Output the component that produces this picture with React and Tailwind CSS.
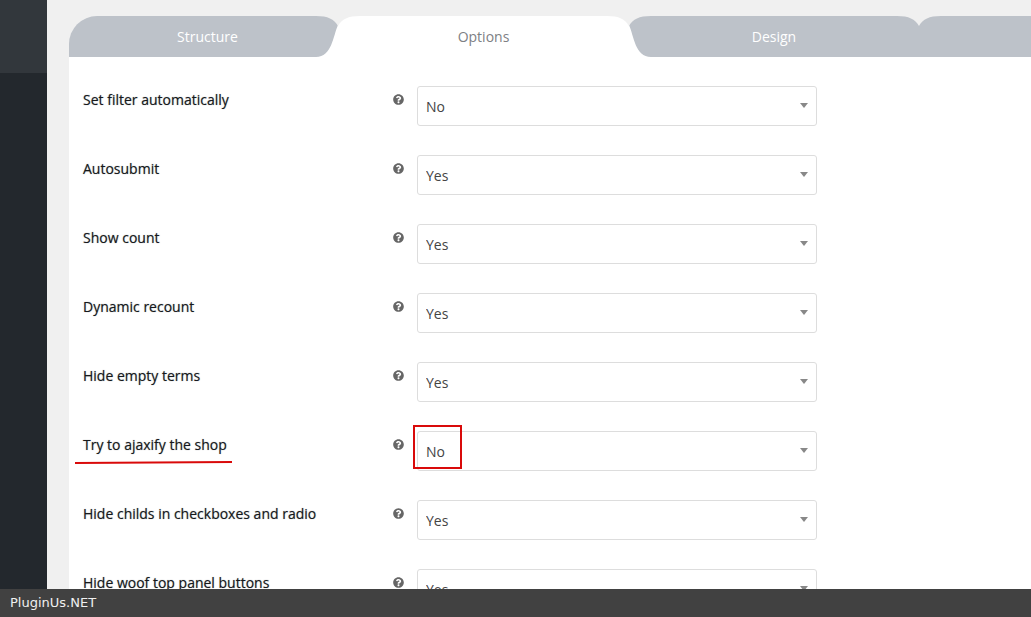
import { useState } from "react";
import { FaQuestionCircle } from "react-icons/fa";

const TABS = [
  { id: "structure", label: "Structure", size: "w-[269px] shrink-0 rounded-tl-[28px] pl-2" },
  { id: "options", label: "Options", size: "w-[291px] shrink-0" },
  { id: "design", label: "Design", size: "w-[290px] shrink-0" },
  { id: "more", label: "", size: "flex-1" },
];

const OPTIONS = [
  { id: "auto", label: "Set filter automatically", value: "No" },
  { id: "autosubmit", label: "Autosubmit", value: "Yes" },
  { id: "count", label: "Show count", value: "Yes" },
  { id: "recount", label: "Dynamic recount", value: "Yes" },
  { id: "empty", label: "Hide empty terms", value: "Yes" },
  { id: "ajax", label: "Try to ajaxify the shop", value: "No", marked: true },
  { id: "childs", label: "Hide childs in checkboxes and radio", value: "Yes" },
  { id: "panel", label: "Hide woof top panel buttons", value: "Yes" },
];

// curved seam between two neighbouring tabs
function TabSeam({ leftActive, rightActive }) {
  return (
    <svg
      className="pointer-events-none absolute -left-[22px] top-0 z-10"
      width="44"
      height="41"
      viewBox="0 0 44 41"
      aria-hidden="true"
    >
      {rightActive && (
        <path d="M22 9 C17 20 16 41 0 41 H23 V9Z" fill="#fff" />
      )}
      {leftActive && (
        <path d="M22 9 C27 20 28 41 44 41 H21 V9Z" fill="#fff" />
      )}
      <path d="M0 0 C12 0 18 3 22 10 C26 3 32 0 44 0Z" fill="#f0f0f0" />
    </svg>
  );
}

function Tabs({ active, onChange }) {
  return (
    <div role="tablist" className="flex h-[41px] overflow-hidden">
      {TABS.map((tab, i) => {
        const isActive = tab.id === active;
        return (
          <button
            key={tab.id}
            type="button"
            role="tab"
            aria-selected={isActive}
            aria-label={tab.label || "More"}
            onClick={() => onChange(tab.id)}
            className={`relative text-sm ${tab.size} ${
              isActive ? "bg-white text-[#7d8084]" : "bg-[#bdc2c9] text-white"
            }`}
          >
            {i > 0 && (
              <TabSeam
                leftActive={TABS[i - 1].id === active}
                rightActive={isActive}
              />
            )}
            {tab.label}
          </button>
        );
      })}
    </div>
  );
}

function OptionRow({ option }) {
  return (
    <div className="flex h-10 items-start">
      <div className="flex w-[334px] shrink-0 justify-between pr-[13px]">
        <div className="relative">
          <label
            htmlFor={option.id}
            className="block pt-1 text-sm font-medium text-[#16191c] [text-shadow:0_0_1px_#23282d80]"
          >
            {option.label}
          </label>
          {option.marked && (
            <svg
              className="absolute -left-2 top-7"
              width="158"
              height="6"
              viewBox="0 0 158 6"
              aria-hidden="true"
            >
              <path d="M0 4 L157 3" stroke="#d90a0a" strokeWidth="2" />
            </svg>
          )}
        </div>
        <FaQuestionCircle className="mt-2 size-[11px] text-[#666]" />
      </div>
      <div className="relative w-[400px]">
        <select
          id={option.id}
          defaultValue={option.value}
          className="h-10 w-full appearance-none rounded-[3px] border border-[#ddd] bg-white px-2 pt-0.5 text-sm text-[#444] outline-none"
        >
          <option>No</option>
          <option>Yes</option>
        </select>
        <svg
          className="pointer-events-none absolute right-[9px] top-[17px]"
          width="8"
          height="5"
          viewBox="0 0 8 5"
          aria-hidden="true"
        >
          <path d="M0 0H8L4 5Z" fill="#888" />
        </svg>
        {option.marked && (
          <div className="pointer-events-none absolute -left-1 -top-1.5 h-11 w-[49px] border-2 border-[#d90a0a]" />
        )}
      </div>
    </div>
  );
}

export default function App() {
  const [active, setActive] = useState("options");

  return (
    <div className="flex h-screen flex-col bg-[#f0f0f0] font-['Open_Sans',sans-serif]">
      <div className="flex min-h-0 flex-1 overflow-hidden">
        <aside className="w-[47px] shrink-0 bg-[#23282d]">
          <div className="h-[73px] bg-[#32373c]" />
        </aside>
        <main className="min-w-0 flex-1 pl-[22px] pt-4">
          <Tabs active={active} onChange={setActive} />
          <form className="flex flex-col gap-[29px] bg-white pb-8 pl-3.5 pt-[29px]">
            {OPTIONS.map((option) => (
              <OptionRow key={option.id} option={option} />
            ))}
          </form>
        </main>
      </div>
      <footer className="flex h-7 shrink-0 items-center bg-[#414141] px-2.5 font-['DejaVu_Sans',sans-serif] text-[13px] text-[#f0f0f0]">
        PluginUs.NET
      </footer>
    </div>
  );
}
